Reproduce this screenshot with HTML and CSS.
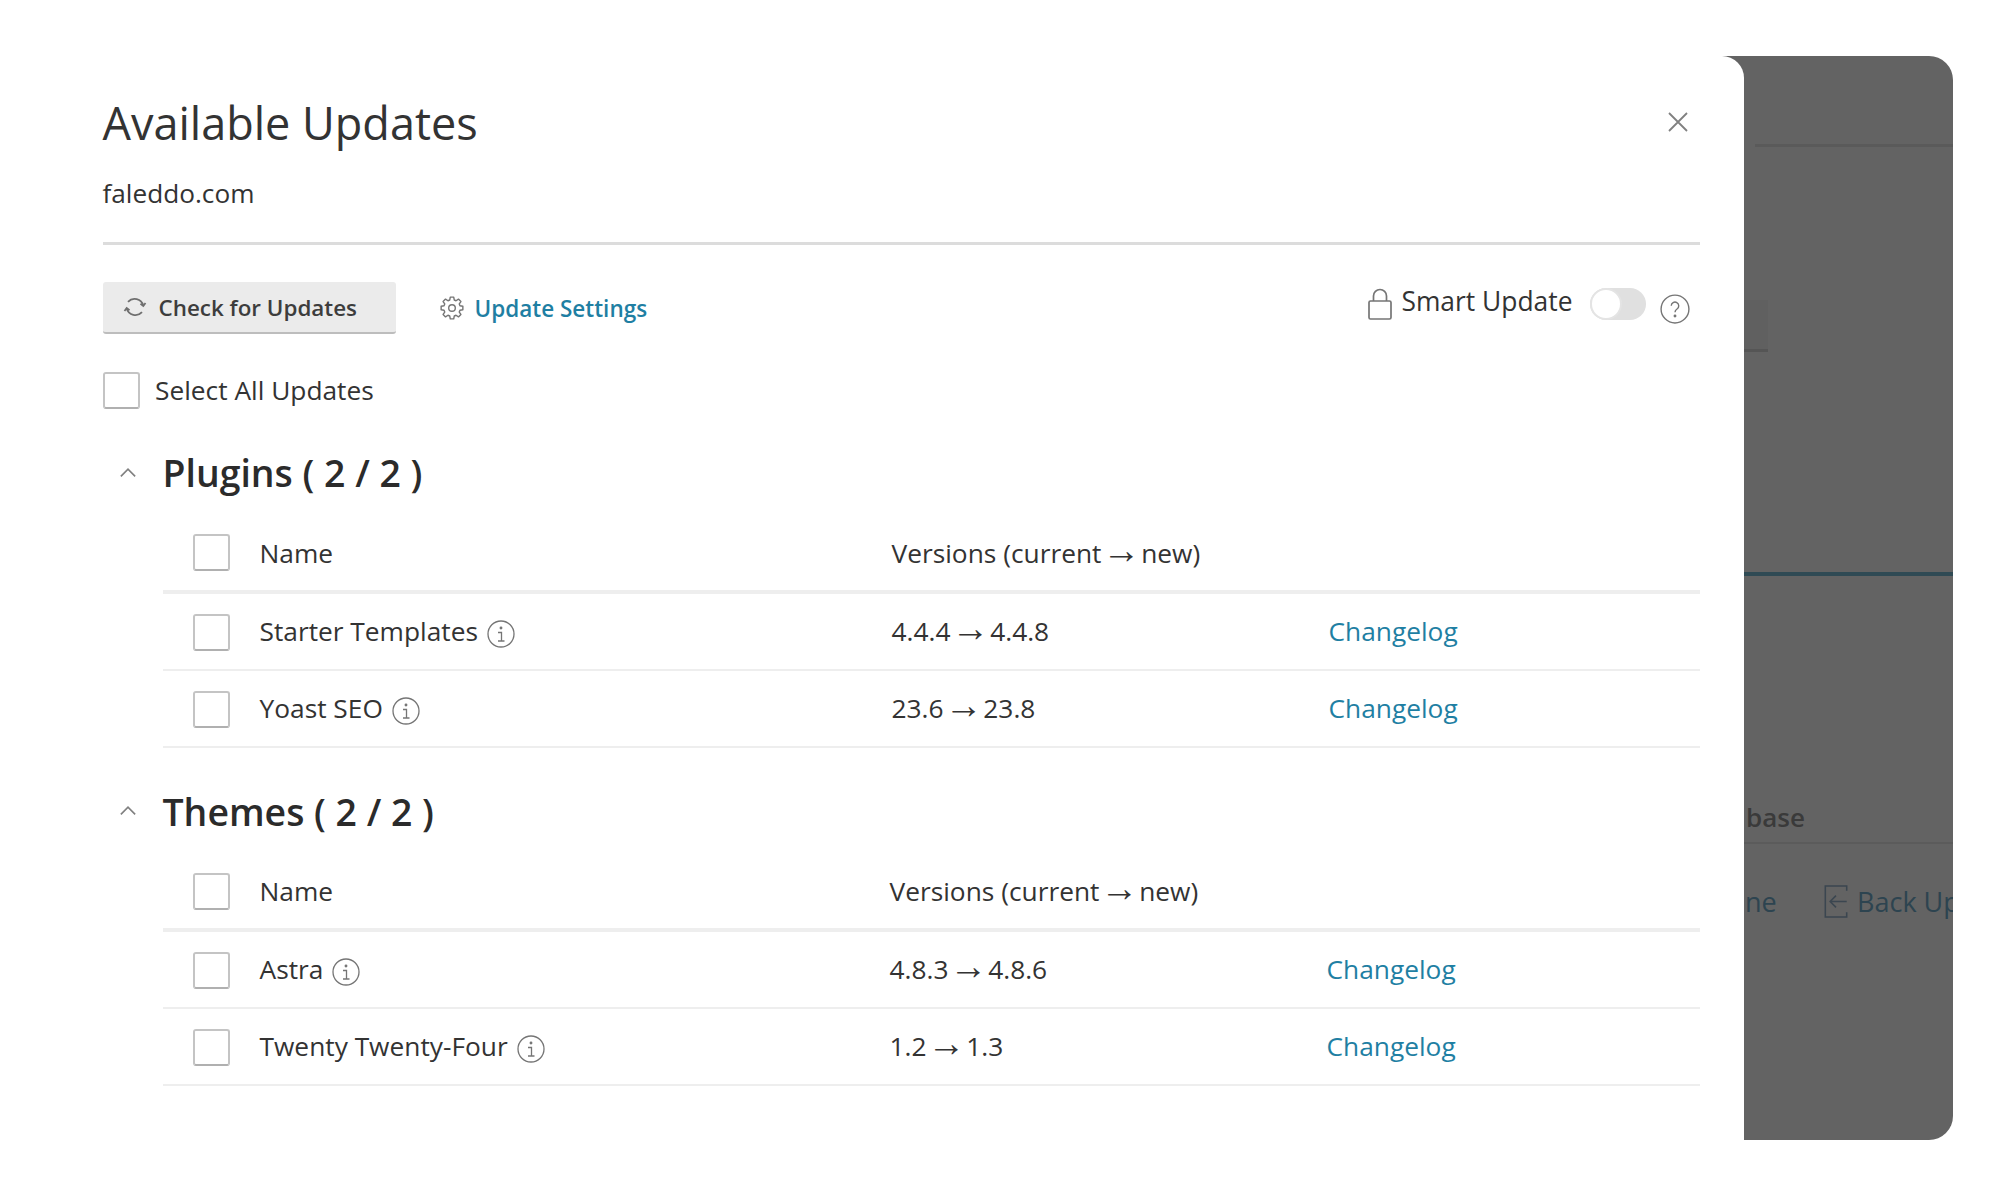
FILE: index.html
```html
<!DOCTYPE html>
<html lang="en">
<head>
<meta charset="utf-8">
<title>Available Updates</title>
<link rel="stylesheet" href="styles.css">
</head>
<body>
<div class="stage">
  <div class="backdrop">
    <div class="bd-line bd-line-top"></div>
    <div class="bd-field"></div>
    <div class="bd-line bd-line-teal"></div>
    <div class="bd-text bd-base">base</div>
    <div class="bd-line bd-line-low"></div>
    <div class="bd-actions">
      <span class="bd-ne">ne</span>
      <svg class="bd-icon" viewBox="0 0 26 36" fill="none" stroke="#3b4650" stroke-width="1.6"><path d="M24 7V2H2v32h22v-5"/><path d="M24 18H7M13 12l-6 6 6 6"/></svg>
      <span class="bd-back">Back Up</span>
    </div>
  </div>

  <main class="modal">
    <header class="modal-head">
      <div class="title-row">
        <h1 class="title">Available Updates</h1>
        <svg class="close" viewBox="0 0 20 20" fill="none" stroke="#808080" stroke-width="1.8"><path d="M1 1l18 18M19 1L1 19"/></svg>
      </div>
      <div class="domain">faleddo.com</div>
    </header>

    <div class="toolbar">
      <button class="btn-check" type="button">
        <svg class="ic-refresh" viewBox="0 0 24 24" fill="none" stroke="#6f6f6f" stroke-width="1.8"><path d="M5 6.800A9 9 0 0 1 20.300 10.500"/><path d="M22.500 8l-2.200 3-2.800-2.200"/><path d="M19 17.200A9 9 0 0 1 3.700 13.500"/><path d="M1.500 16l2.200-3 2.800 2.200"/></svg>
        Check for Updates
      </button>
      <a class="settings" href="#">
        <svg class="ic-gear" viewBox="0 0 24 24" fill="none" stroke="#757575" stroke-width="1.4" stroke-linejoin="round"><circle cx="12" cy="12" r="3.300"/><polygon points="9.71,4.02 10.28,1.14 13.72,1.14 14.29,4.02 16.03,4.74 18.47,3.10 20.90,5.53 19.26,7.97 19.98,9.71 22.86,10.28 22.86,13.72 19.98,14.29 19.26,16.03 20.90,18.47 18.47,20.90 16.03,19.26 14.29,19.98 13.72,22.86 10.28,22.86 9.71,19.98 7.97,19.26 5.53,20.90 3.10,18.47 4.74,16.03 4.02,14.29 1.14,13.72 1.14,10.28 4.02,9.71 4.74,7.97 3.10,5.53 5.53,3.10 7.97,4.74"/></svg>
        <span>Update Settings</span>
      </a>
      <div class="smart">
        <svg class="ic-lock" viewBox="0 0 24 32" fill="none" stroke="#757575" stroke-width="1.7"><rect x="1" y="13" width="22" height="18" rx="1.5"/><path d="M5.500 13V8a6.500 6.500 0 0 1 13 0v5"/></svg>
        <span class="smart-label">Smart Update</span>
        <span class="toggle"><span class="knob"></span></span>
        <svg class="ic-help" viewBox="0 0 28 28" fill="none" stroke="#757575" stroke-width="1.3"><circle cx="14" cy="14" r="13"/><path d="M10.500 11a3.500 3.500 0 1 1 5.400 3c-1.300.9-1.900 1.500-1.900 3"/><circle cx="14" cy="20.500" r=".7" fill="#757575"/></svg>
      </div>
    </div>

    <label class="select-all"><span class="box"></span><span>Select All Updates</span></label>

    <section class="group">
      <h2 class="group-title">
        <svg class="chev" viewBox="0 0 16 10" fill="none" stroke="#808080" stroke-width="1.5"><path d="M1.500 8.500L8 2l6.500 6.500"/></svg>
        Plugins ( 2 / 2 )
      </h2>
      <div class="row row-head">
        <span class="box"></span><span class="c-name">Name</span><span class="c-ver">Versions (current<span class="arrow"> → </span>new)</span>
      </div>
      <div class="row">
        <span class="box"></span>
        <span class="c-name">Starter Templates <svg class="ic-info" viewBox="0 0 28 28" fill="none" stroke="#757575" stroke-width="1.3"><circle cx="14" cy="14" r="13"/><path d="M11 12.500h3.500V21M11 21h6.500"/><circle cx="14" cy="8" r=".8" fill="#757575"/></svg></span>
        <span class="c-ver">4.4.4<span class="arrow"> → </span>4.4.8</span><a class="c-log" href="#">Changelog</a>
      </div>
      <div class="row">
        <span class="box"></span>
        <span class="c-name">Yoast SEO <svg class="ic-info" viewBox="0 0 28 28" fill="none" stroke="#757575" stroke-width="1.3"><circle cx="14" cy="14" r="13"/><path d="M11 12.500h3.500V21M11 21h6.500"/><circle cx="14" cy="8" r=".8" fill="#757575"/></svg></span>
        <span class="c-ver">23.6<span class="arrow"> → </span>23.8</span><a class="c-log" href="#">Changelog</a>
      </div>
    </section>

    <section class="group group-themes">
      <h2 class="group-title">
        <svg class="chev" viewBox="0 0 16 10" fill="none" stroke="#808080" stroke-width="1.5"><path d="M1.500 8.500L8 2l6.500 6.500"/></svg>
        Themes ( 2 / 2 )
      </h2>
      <div class="row row-head">
        <span class="box"></span><span class="c-name">Name</span><span class="c-ver">Versions (current<span class="arrow"> → </span>new)</span>
      </div>
      <div class="row">
        <span class="box"></span>
        <span class="c-name">Astra <svg class="ic-info" viewBox="0 0 28 28" fill="none" stroke="#757575" stroke-width="1.3"><circle cx="14" cy="14" r="13"/><path d="M11 12.500h3.500V21M11 21h6.500"/><circle cx="14" cy="8" r=".8" fill="#757575"/></svg></span>
        <span class="c-ver">4.8.3<span class="arrow"> → </span>4.8.6</span><a class="c-log" href="#">Changelog</a>
      </div>
      <div class="row">
        <span class="box"></span>
        <span class="c-name">Twenty Twenty-Four <svg class="ic-info" viewBox="0 0 28 28" fill="none" stroke="#757575" stroke-width="1.3"><circle cx="14" cy="14" r="13"/><path d="M11 12.500h3.500V21M11 21h6.500"/><circle cx="14" cy="8" r=".8" fill="#757575"/></svg></span>
        <span class="c-ver">1.2<span class="arrow"> → </span>1.3</span><a class="c-log" href="#">Changelog</a>
      </div>
    </section>
  </main>
</div>
</body>
</html>
```

FILE: styles.css
```css
* { box-sizing: border-box; }
html, body { margin: 0; height: 100%; background: #fff; }
body { font-family: "Open Sans", "Liberation Sans", sans-serif; color: #333; overflow: hidden; }
.stage { position: relative; width: 2010px; height: 1197px; overflow: hidden; }

.backdrop { position: absolute; left: 1700px; top: 56px; width: 253px; height: 1084px; background: #636363; border-radius: 0 24px 24px 0; overflow: hidden; }
.bd-line { position: absolute; left: 55px; right: 0; height: 3px; background: #5a5a5a; }
.bd-line-top { top: 88px; }
.bd-line-teal { top: 516px; left: 44px; background: #2f4a54; height: 4px; }
.bd-line-low { top: 786px; left: 44px; height: 2px; background: #5b5b5b; }
.bd-field { position: absolute; left: 44px; top: 244px; width: 24px; height: 52px; background: #606060; border-bottom: 3px solid #555; }
.bd-text { position: absolute; font-size: 26px; color: #3a3a3a; }
.bd-base { left: 46px; top: 743px; font-weight: 600; }
.bd-actions { position: absolute; left: 45px; top: 827px; display: flex; align-items: center; white-space: nowrap; font-size: 27px; color: #2d4450; }
.bd-ne { width: 78px; }
.bd-icon { width: 26px; height: 35px; margin-right: 8px; flex: none; }

.modal { position: absolute; left: 0; top: 56px; width: 1744px; height: 1084px; background: #fff; border-top-right-radius: 22px; padding: 0 44px 0 102.5px; }

.modal-head { border-bottom: 3px solid #dcdcdc; height: 189px; }
.title-row { display: flex; justify-content: space-between; align-items: center; height: 132px; padding-right: 12px; }
.title { font-size: 45px; font-weight: 400; margin: 0; color: #333; line-height: 1; }
.close { width: 20px; height: 20px; }
.domain { font-size: 26.2px; line-height: 36px; margin-top: -13px; color: #333; }

.toolbar { display: flex; align-items: center; height: 53px; margin-top: 36px; }
.btn-check { display: flex; align-items: center; width: 293px; height: 52px; padding: 1px 0 0 20.5px; gap: 11.5px; border: 0; border-bottom: 2px solid #bdbdbd; border-radius: 3px; background: #ebebeb; font: 600 22.4px "Open Sans", sans-serif; color: #3d3d3d; }
.ic-refresh { width: 24px; height: 24px; flex: none; }
.settings { display: flex; align-items: center; gap: 11px; margin: 1px 0 0 44px; font-size: 22.5px; font-weight: 600; color: #1f7fa3; text-decoration: none; }
.ic-gear { width: 24px; height: 24px; }
.smart { margin-left: auto; display: flex; align-items: center; padding-right: 10.5px; }
.ic-lock { width: 24px; height: 32px; margin-right: 9px; margin-top: -8px; }
.smart-label { font-size: 26.4px; margin-top: -13px; margin-right: 17px; }
.toggle { display: block; width: 56px; height: 32px; margin-top: -8px; margin-right: 14px; border-radius: 16px; background: #e0e0e0; }
.knob { display: block; width: 32px; height: 32px; border-radius: 50%; background: #fff; border: 2px solid #e4e4e4; }
.ic-help { width: 30px; height: 30px; margin-top: 2px; }

.box { display: block; width: 37px; height: 37px; flex: none; border: 2px solid #c4c4c4; border-bottom-color: #b0b0b0; border-radius: 3px; background: #fff; }
.select-all { display: flex; align-items: center; gap: 15.5px; margin-top: 37px; font-size: 26.3px; height: 38px; }

.group { margin: 0 0 0 60px; }
.group-title { position: relative; display: flex; align-items: center; margin: 39.5px 0 0 0; height: 48px; font-size: 37.4px; font-weight: 600; color: #2b2b2b; }
.chev { position: absolute; left: -44px; top: 18px; width: 18px; height: 11px; }

.row { display: flex; align-items: center; height: 77px; padding: 2px 0 0 30px; border-bottom: 2px solid #eee; font-size: 26.3px; }
.row .c-name { display: flex; align-items: center; gap: 9px; width: 632px; margin: 0 0 3px 30px; }
.row .c-ver { width: 437px; margin-bottom: 3px; }
.c-log { margin-bottom: 3px; color: #1f7fa3; text-decoration: none; }
.row-head { height: 78px; border-bottom-width: 4px; margin-top: 19px; padding-top: 0; }
.row-head .c-name, .row-head .c-ver { margin-bottom: 0; }
.ic-info { width: 28px; height: 28px; margin-top: 6px; flex: none; }
.arrow { font-family: "Liberation Sans", sans-serif; font-size: 38px; line-height: 0; word-spacing: -10.56px; margin: 0 .9px; }

.group-themes { margin-top: 39.5px; }
.group-themes .group-title { margin-top: 0; }
.group-themes .c-name { width: 630px; }
```
